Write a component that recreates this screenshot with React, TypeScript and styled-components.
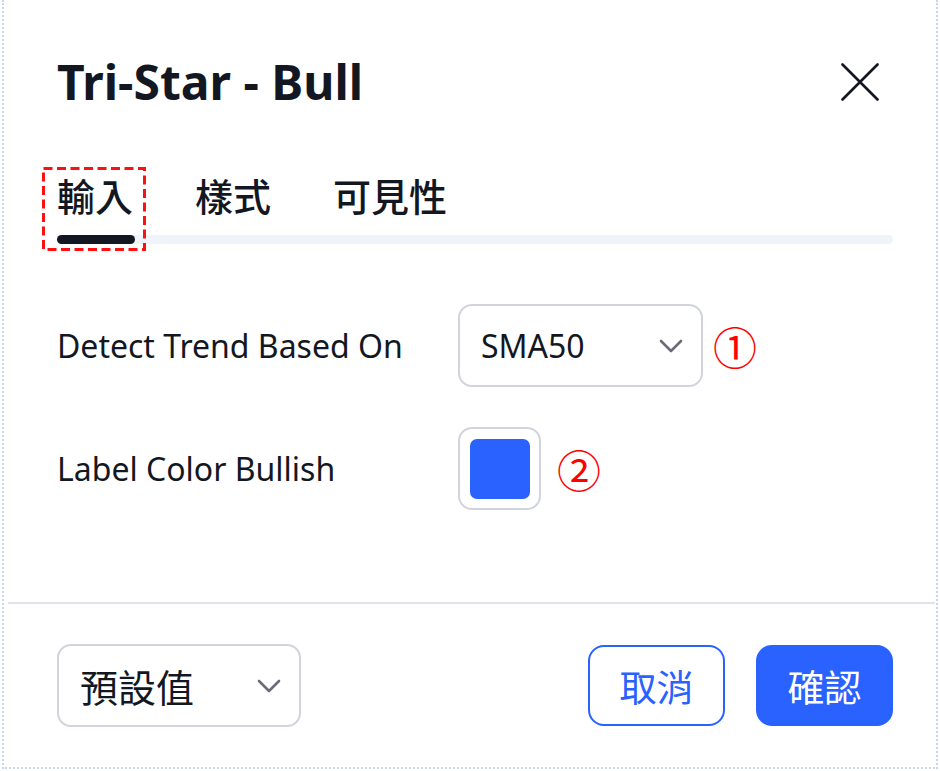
import { FC } from 'react';
import styled, { createGlobalStyle } from 'styled-components';

const GlobalStyle = createGlobalStyle`
  html, body {
    margin: 0;
    padding: 0;
    background: #ffffff;
  }
  body {
    font-family: 'Noto Sans', 'Noto Sans CJK TC', sans-serif;
    color: #131722;
  }
`;

const Frame = styled.div`
  box-sizing: border-box;
  width: 936px;
  height: 769px;
  margin: 0 2px;
  border: 2px dotted #c4d6f2;
  border-top: none;
  display: flex;
  flex-direction: column;
  background: #ffffff;
`;

const Header = styled.div`
  display: flex;
  align-items: center;
  justify-content: space-between;
  padding: 44px 57px 0 53px;
  height: 76px;
`;

const Title = styled.h1`
  margin: 0;
  font-size: 48px;
  line-height: 76px;
  font-weight: 700;
  color: #131722;
`;

const CloseButton = styled.button`
  width: 38px;
  height: 38px;
  padding: 0;
  border: none;
  background: transparent;
  color: #131722;
  cursor: pointer;
  display: flex;
`;

const Tabs = styled.div`
  position: relative;
  margin: 50px 43px 0 53px;
`;

const TabList = styled.div`
  display: flex;
  gap: 62px;
`;

const Tab = styled.div<{ $active?: boolean }>`
  font-family: 'Noto Sans CJK TC', sans-serif;
  font-size: 38px;
  line-height: 50px;
  font-weight: 500;
  color: #131722;
  cursor: pointer;
`;

const Track = styled.div`
  margin-top: 15px;
  height: 9px;
  border-radius: 5px;
  background: #f0f3fa;
`;

const Indicator = styled.div`
  width: 78px;
  height: 9px;
  border-radius: 5px;
  background: #131722;
`;

const Highlight = styled.svg`
  position: absolute;
  left: -15px;
  top: -3px;
  width: 104px;
  height: 84px;
  pointer-events: none;
  overflow: visible;
`;

const Body = styled.div`
  flex: 1;
  display: flex;
  flex-direction: column;
  gap: 40px;
  padding: 60px 43px 0 53px;
`;

const Row = styled.div`
  display: flex;
  align-items: center;
  height: 83px;
`;

const Label = styled.div`
  width: 401px;
  font-size: 32px;
  line-height: 40px;
  color: #131722;
`;

const SelectBox = styled.div<{ $width: number }>`
  box-sizing: border-box;
  width: ${(p) => p.$width}px;
  height: 83px;
  border: 2px solid #d1d4dc;
  border-radius: 14px;
  display: flex;
  align-items: center;
  justify-content: space-between;
  padding: 0 18px 0 21px;
  background: #ffffff;
  cursor: pointer;
`;

const SelectText = styled.span<{ $cjk?: boolean }>`
  font-family: ${(p) => (p.$cjk ? "'Noto Sans CJK TC', sans-serif" : "'Noto Sans', sans-serif")};
  font-size: ${(p) => (p.$cjk ? 38 : 32)}px;
  color: #131722;
`;

const Swatch = styled.div`
  box-sizing: border-box;
  width: 83px;
  height: 83px;
  border: 2px solid #d1d4dc;
  border-radius: 14px;
  display: flex;
  align-items: center;
  justify-content: center;
  cursor: pointer;
`;

const SwatchColor = styled.div<{ $color: string }>`
  width: 60px;
  height: 60px;
  border-radius: 7px;
  background: ${(p) => p.$color};
`;

const Marker = styled.span<{ $gap: number }>`
  margin-left: ${(p) => p.$gap}px;
  font-family: 'Noto Sans CJK JP', sans-serif;
  font-size: 44px;
  line-height: 44px;
  color: #ff0000;
`;

const Divider = styled.div`
  height: 2px;
  margin: 0 1px 0 4px;
  background: #e0e3eb;
`;

const Footer = styled.div`
  display: flex;
  align-items: center;
  gap: 31px;
  padding: 40px 43px 40px 53px;
`;

const Spacer = styled.div`
  flex: 1;
`;

const ActionButton = styled.button<{ $primary?: boolean }>`
  box-sizing: border-box;
  width: 137px;
  height: 81px;
  border-radius: 16px;
  border: 2px solid #2962ff;
  background: ${(p) => (p.$primary ? '#2962ff' : '#ffffff')};
  color: ${(p) => (p.$primary ? '#ffffff' : '#2962ff')};
  font-family: 'Noto Sans CJK TC', sans-serif;
  font-size: 37px;
  padding: 0;
  cursor: pointer;
`;

const Chevron: FC = () => (
  <svg width="24" height="14" viewBox="0 0 24 14" fill="none">
    <polyline points="2,2 12,12 22,2" stroke="#6a6d78" strokeWidth="2.6" strokeLinecap="round" strokeLinejoin="round" />
  </svg>
);

const CloseIcon: FC = () => (
  <svg width="38" height="38" viewBox="0 0 38 38" fill="none">
    <path d="M1.5 1.5 L36.5 36.5 M36.5 1.5 L1.5 36.5" stroke="currentColor" strokeWidth="2.6" strokeLinecap="round" />
  </svg>
);

const tabs = ['輸入', '樣式', '可見性'];

const App: FC = () => {
  return (
    <>
      <GlobalStyle />
      <Frame>
        <Header>
          <Title>Tri-Star - Bull</Title>
          <CloseButton>
            <CloseIcon />
          </CloseButton>
        </Header>

        <Tabs>
          <TabList>
            {tabs.map((t, i) => (
              <Tab key={t} $active={i === 0}>
                {t}
              </Tab>
            ))}
          </TabList>
          <Track>
            <Indicator />
          </Track>
          <Highlight viewBox="0 0 104 84">
            <rect x="1.5" y="1.5" width="101" height="81" fill="none" stroke="#ff1010" strokeWidth="3" strokeDasharray="9 4.5" />
          </Highlight>
        </Tabs>

        <Body>
          <Row>
            <Label>Detect Trend Based On</Label>
            <SelectBox $width={245}>
              <SelectText>SMA50</SelectText>
              <Chevron />
            </SelectBox>
            <Marker $gap={10}>①</Marker>
          </Row>
          <Row>
            <Label>Label Color Bullish</Label>
            <Swatch>
              <SwatchColor $color="#2962ff" />
            </Swatch>
            <Marker $gap={16}>②</Marker>
          </Row>
        </Body>

        <Divider />
        <Footer>
          <SelectBox $width={244}>
            <SelectText $cjk>預設值</SelectText>
            <Chevron />
          </SelectBox>
          <Spacer />
          <ActionButton>取消</ActionButton>
          <ActionButton $primary>確認</ActionButton>
        </Footer>
      </Frame>
    </>
  );
};

export default App;
